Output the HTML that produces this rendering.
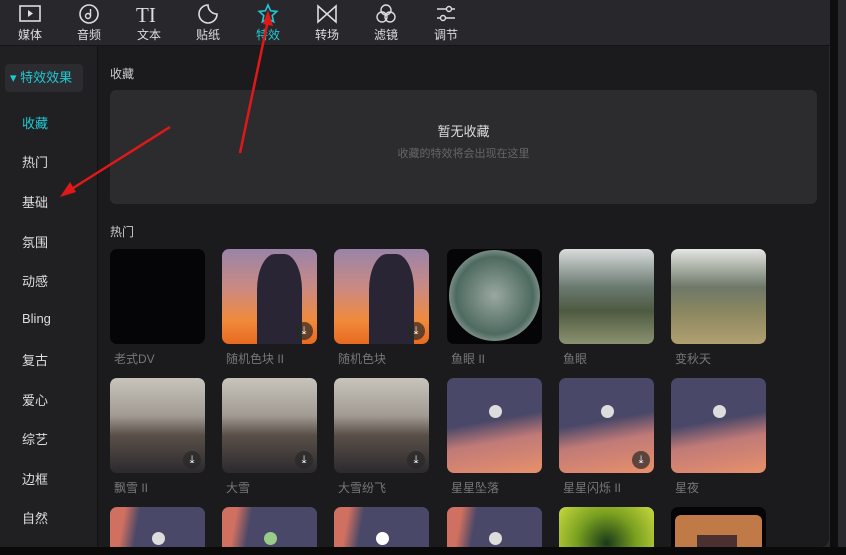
<!DOCTYPE html><html><head><meta charset="utf-8"><style>
html,body{margin:0;width:846px;height:555px;overflow:hidden}
body{background:#2a2a2e;font-family:"Liberation Sans","Noto Sans CJK SC",sans-serif}
#w{position:relative;width:846px;height:555px;overflow:hidden}
.top{position:absolute;left:0;top:0;width:830px;height:45px;background:#28282c;border-bottom:1px solid #151517}
.tab{position:absolute;top:0;width:50px;text-align:center;color:#ddd;font-size:12px}
.tab svg{display:block;margin:3px auto 1px}
.side{position:absolute;left:0;top:46px;width:97px;height:501px;background:#202023;border-right:1px solid #111}
.main{position:absolute;left:98px;top:46px;width:731px;height:501px;background:#1b1b1d;border-radius:0 0 8px 0}
.div{position:absolute;left:830px;top:0;width:8px;height:555px;background:#0e0e10;z-index:5}
.bot{position:absolute;left:0;top:547px;width:846px;height:8px;background:#0a0a0a;z-index:5}
.si{position:absolute;left:22px;color:#ddd;font-size:13px}
.th{position:absolute;width:95px;height:95px;border-radius:7px;overflow:hidden}
.lb{position:absolute;color:#777;font-size:12px}
.dl{position:absolute;right:4px;bottom:4px;width:18px;height:18px;border-radius:9px;background:rgba(40,40,40,.7);color:#fff;font-size:11px;text-align:center;line-height:18px}
.moon{position:absolute;left:42px;top:27px;width:13px;height:13px;border-radius:50%;background:#ddd}
</style></head><body><div id="w">
<div class="top">
<div class="tab" style="left:5px"><svg width="24" height="22"><rect x="2" y="3" width="20" height="15" fill="none" stroke="#ddd" stroke-width="1.6"/><path d="M10 7l5 3.5-5 3.5z" fill="#ddd"/></svg><span>媒体</span></div>
<div class="tab" style="left:64px"><svg width="24" height="22"><circle cx="12" cy="11" r="9" fill="none" stroke="#ddd" stroke-width="1.6"/><circle cx="11" cy="13" r="2.5" fill="none" stroke="#ddd" stroke-width="1.4"/><path d="M13.5 13V6" stroke="#ddd" stroke-width="1.4"/></svg><span>音频</span></div>
<div class="tab" style="left:124px"><svg width="28" height="22"><text x="1" y="19" font-family="Liberation Serif" font-size="21" fill="#ddd">TI</text></svg><span>文本</span></div>
<div class="tab" style="left:183px"><svg width="24" height="22"><path d="M12 2a9 9 0 1 0 9 9c-4.5 0-9-3.5-9-9z" fill="none" stroke="#ddd" stroke-width="1.6"/></svg><span>贴纸</span></div>
<div class="tab" style="left:243px;color:#1fc8d2"><svg width="24" height="22"><path d="M12 2l2.6 5.8 6.2.6-4.6 4.2 1.4 6.2L12 15.6l-5.6 3.2 1.4-6.2L3.2 8.4l6.2-.6z" fill="none" stroke="#1fc8d2" stroke-width="1.6"/></svg><span>特效</span></div>
<div class="tab" style="left:302px"><svg width="24" height="22"><path d="M3 3v16l18-16v16z" fill="none" stroke="#ddd" stroke-width="1.6"/></svg><span>转场</span></div>
<div class="tab" style="left:361px"><svg width="24" height="22"><circle cx="12" cy="7" r="5" fill="none" stroke="#ddd" stroke-width="1.4"/><circle cx="8" cy="14" r="5" fill="none" stroke="#ddd" stroke-width="1.4"/><circle cx="16" cy="14" r="5" fill="none" stroke="#ddd" stroke-width="1.4"/></svg><span>滤镜</span></div>
<div class="tab" style="left:421px"><svg width="24" height="22"><path d="M3 6h18M3 15h18" stroke="#ddd" stroke-width="1.4"/><circle cx="15" cy="6" r="2.5" fill="#28282c" stroke="#ddd" stroke-width="1.4"/><circle cx="9" cy="15" r="2.5" fill="#28282c" stroke="#ddd" stroke-width="1.4"/></svg><span>调节</span></div>
</div>
<div class="side">
<div style="position:absolute;left:5px;top:18px;width:78px;height:28px;background:#2c2c30;border-radius:4px;color:#1fc8d2;font-size:13px;line-height:28px;padding-left:5px;box-sizing:border-box">▾ 特效效果</div>
<div class="si" style="top:67px;color:#1fc8d2">收藏</div>
<div class="si" style="top:106px">热门</div>
<div class="si" style="top:146px">基础</div>
<div class="si" style="top:186px">氛围</div>
<div class="si" style="top:225px">动感</div>
<div class="si" style="top:265px">Bling</div>
<div class="si" style="top:304px">复古</div>
<div class="si" style="top:344px">爱心</div>
<div class="si" style="top:383px">综艺</div>
<div class="si" style="top:423px">边框</div>
<div class="si" style="top:462px">自然</div>
</div>
<div class="main">
<div style="position:absolute;left:12px;top:19px;color:#ccc;font-size:12px">收藏</div>
<div style="position:absolute;left:12px;top:44px;width:707px;height:114px;background:#2c2c2f;border-radius:6px;text-align:center">
<div style="margin-top:31px;color:#ddd;font-size:13px">暂无收藏</div>
<div style="margin-top:5px;color:#666;font-size:11px">收藏的特效将会出现在这里</div></div>
<div style="position:absolute;left:12px;top:177px;color:#ccc;font-size:12px">热门</div>
</div>
<div class="th" style="left:110px;top:249px;background:#050507"></div>
<div class="th" style="left:222px;top:249px;background:linear-gradient(#9a84a8,#c98a84 40%,#f08a3c 75%,#e86a20)"><div style="position:absolute;left:35px;top:5px;width:45px;height:90px;background:#2a2535;border-radius:40% 40% 0 0"></div><div class="dl">⤓</div></div>
<div class="th" style="left:334px;top:249px;background:linear-gradient(#9a84a8,#c98a84 40%,#f08a3c 75%,#e86a20)"><div style="position:absolute;left:35px;top:5px;width:45px;height:90px;background:#2a2535;border-radius:40% 40% 0 0"></div><div class="dl">⤓</div></div>
<div class="th" style="left:447px;top:249px;background:#050507"><div style="position:absolute;left:2px;top:1px;width:91px;height:91px;border-radius:50%;background:radial-gradient(#9aa8a0,#4e6a60 60%,#c8ccc8 90%)"></div></div>
<div class="th" style="left:559px;top:249px;background:linear-gradient(#d8dcdc,#6a7a70 40%,#4e5a40 65%,#8a9270)"></div>
<div class="th" style="left:671px;top:249px;background:linear-gradient(#e4e6e2,#6e7868 40%,#8a8660 65%,#b0a070)"></div>
<div class="lb" style="left:114px;top:350px">老式DV</div><div class="lb" style="left:226px;top:350px">随机色块 II</div><div class="lb" style="left:338px;top:350px">随机色块</div><div class="lb" style="left:451px;top:350px">鱼眼 II</div><div class="lb" style="left:563px;top:350px">鱼眼</div><div class="lb" style="left:675px;top:350px">变秋天</div>
<div class="th" style="left:110px;top:378px;background:linear-gradient(#c8c4bc,#a09a92 40%,#5a5048 60%,#2c2a2e)"><div class="dl">⤓</div></div>
<div class="th" style="left:222px;top:378px;background:linear-gradient(#c8c4bc,#a09a92 40%,#5a5048 60%,#2c2a2e)"><div class="dl">⤓</div></div>
<div class="th" style="left:334px;top:378px;background:linear-gradient(#c8c4bc,#a09a92 40%,#5a5048 60%,#2c2a2e)"><div class="dl">⤓</div></div>
<div class="th" style="left:447px;top:378px;background:linear-gradient(170deg,#4a4868 45%,#c07a78 65%,#e8906a)"><div class="moon"></div></div>
<div class="th" style="left:559px;top:378px;background:linear-gradient(170deg,#4a4868 45%,#c07a78 65%,#e8906a)"><div class="moon"></div><div class="dl">⤓</div></div>
<div class="th" style="left:671px;top:378px;background:linear-gradient(170deg,#4a4868 45%,#c07a78 65%,#e8906a)"><div class="moon"></div></div>
<div class="lb" style="left:114px;top:479px">飘雪 II</div><div class="lb" style="left:226px;top:479px">大雪</div><div class="lb" style="left:338px;top:479px">大雪纷飞</div><div class="lb" style="left:451px;top:479px">星星坠落</div><div class="lb" style="left:563px;top:479px">星星闪烁 II</div><div class="lb" style="left:675px;top:479px">星夜</div>
<div class="th" style="left:110px;top:507px;height:40px;border-radius:7px 7px 0 0;background:linear-gradient(100deg,#d07060 15%,#4a4868 30%)"><div class="moon" style="top:25px"></div></div>
<div class="th" style="left:222px;top:507px;height:40px;border-radius:7px 7px 0 0;background:linear-gradient(100deg,#d07060 15%,#4a4868 30%)"><div class="moon" style="top:25px;background:#9c8"></div></div>
<div class="th" style="left:334px;top:507px;height:40px;border-radius:7px 7px 0 0;background:linear-gradient(100deg,#d07060 15%,#4a4868 30%)"><div class="moon" style="top:25px;background:#fff"></div></div>
<div class="th" style="left:447px;top:507px;height:40px;border-radius:7px 7px 0 0;background:linear-gradient(100deg,#d07060 15%,#4a4868 30%)"><div class="moon" style="top:25px"></div></div>
<div class="th" style="left:559px;top:507px;height:40px;border-radius:7px 7px 0 0;background:radial-gradient(circle at 50% 90%,#1a3a1a,#7aa020 50%,#c8d840)"></div>
<div class="th" style="left:671px;top:507px;height:40px;border-radius:7px 7px 0 0;background:#050507"><div style="position:absolute;left:4px;top:8px;width:87px;height:87px;background:#c07a48;border-radius:6px"></div><div style="position:absolute;left:26px;top:28px;width:40px;height:30px;background:#4a3030"></div></div>
<div class="div"></div><div class="bot"></div>
<svg style="position:absolute;left:0;top:0;z-index:6" width="846" height="555">
<path d="M240 153L268 20" stroke="#e01818" stroke-width="2.5"/><path d="M268 10l5 16-10-2z" fill="#e01818"/>
<path d="M170 127L70 190" stroke="#e01818" stroke-width="2.5"/><path d="M60 197l10-15 6 10z" fill="#e01818"/>
</svg>
</div></body></html>
